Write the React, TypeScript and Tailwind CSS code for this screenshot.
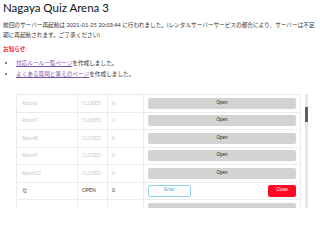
const lato = "font-['Lato','Noto_Sans_CJK_JP',sans-serif]";
const btn = "font-['Liberation_Sans','Noto_Sans_CJK_JP',sans-serif]";

type Room = { name: string; status: string; count: string; open: boolean };

const rooms: Room[] = [
  { name: "Room6", status: "CLOSED", count: "0", open: false },
  { name: "Room7", status: "CLOSED", count: "0", open: false },
  { name: "Room8", status: "CLOSED", count: "0", open: false },
  { name: "Room9", status: "CLOSED", count: "0", open: false },
  { name: "Room10", status: "CLOSED", count: "0", open: false },
  { name: "な", status: "OPEN", count: "0", open: true },
  // next row is cut by the bottom edge, only its button top shows
  { name: "", status: "", count: "", open: false },
];

function RoomRow({ room }: { room: Room }) {
  const txt = room.open ? "text-[#333]" : "text-[#c9c9c9]";
  return (
    <tr className="h-[17.5px] border-b border-[#ececec]">
      <td className={`w-[61px] border-r border-[#ececec] pl-[5px] ${txt}`}>{room.name}</td>
      <td className={`w-[30px] border-r border-[#ececec] pl-[4px] ${txt}`}>{room.status}</td>
      <td className={`w-[36px] border-r border-[#ececec] pl-[4px] ${txt}`}>{room.count}</td>
      <td className="px-[4px]">
        {room.open ? (
          <div className="flex items-center justify-between">
            <button className={`${btn} h-[11.5px] w-[43px] rounded-[2px] border border-[#8fd0ec] bg-white text-[4.5px] text-[#3aa7d9]`}>
              Enter
            </button>
            <button className={`${btn} h-[11.5px] w-[28px] rounded-[2px] bg-[#ff0a24] text-[4.5px] text-white`}>
              Close
            </button>
          </div>
        ) : (
          <button className={`${btn} block h-[11px] w-full rounded-[2px] bg-[#d3d3d3] text-[4.5px] text-[#222]`}>
            {room.name ? "Open" : ""}
          </button>
        )}
      </td>
    </tr>
  );
}

export default function App() {
  return (
    <div className={`${lato} h-[208px] w-[320px] overflow-hidden bg-white px-[3px] text-[#333]`}>
      <h1 className="pt-[1px] text-[11.5px] leading-[14px] text-[#111]">Nagaya Quiz Arena 3</h1>
      <p className="mt-[5px] text-[5.65px] leading-[9.5px]">
        前回のサーバー再起動は 2021-01-25 20:03:44 に行われました。(レンタルサーバーサービスの都合により、サーバーは不定期に再起動されます。ご了承ください)
      </p>
      <p className="mt-[5px] text-[5.65px] font-bold leading-[9px] text-[#ff1a2e]">お知らせ:</p>
      <ul className="mt-[5px] list-disc pl-[13px] text-[5.65px] leading-[10.5px] marker:text-[#555]">
        <li>
          <a href="#" className="text-[#7a52a8] underline">対応ルール一覧ページ</a>を作成しました。
        </li>
        <li>
          <a href="#" className="text-[#7a52a8] underline">よくある質問と答えのページ</a>を作成しました。
        </li>
      </ul>
      <div className="mt-[15px] ml-[13px] flex w-[293px] gap-[4px]">
        <table className="w-[285px] border-collapse border-x border-t border-[#ececec] text-[5px]">
          <tbody>
            {rooms.map((r, i) => (
              <RoomRow key={i} room={r} />
            ))}
          </tbody>
        </table>
        <div className="flex w-[3px] flex-col bg-[#ebe4e7]">
          <div className="mt-[13px] h-[15px] bg-[#56636e]" />
        </div>
      </div>
    </div>
  );
}
